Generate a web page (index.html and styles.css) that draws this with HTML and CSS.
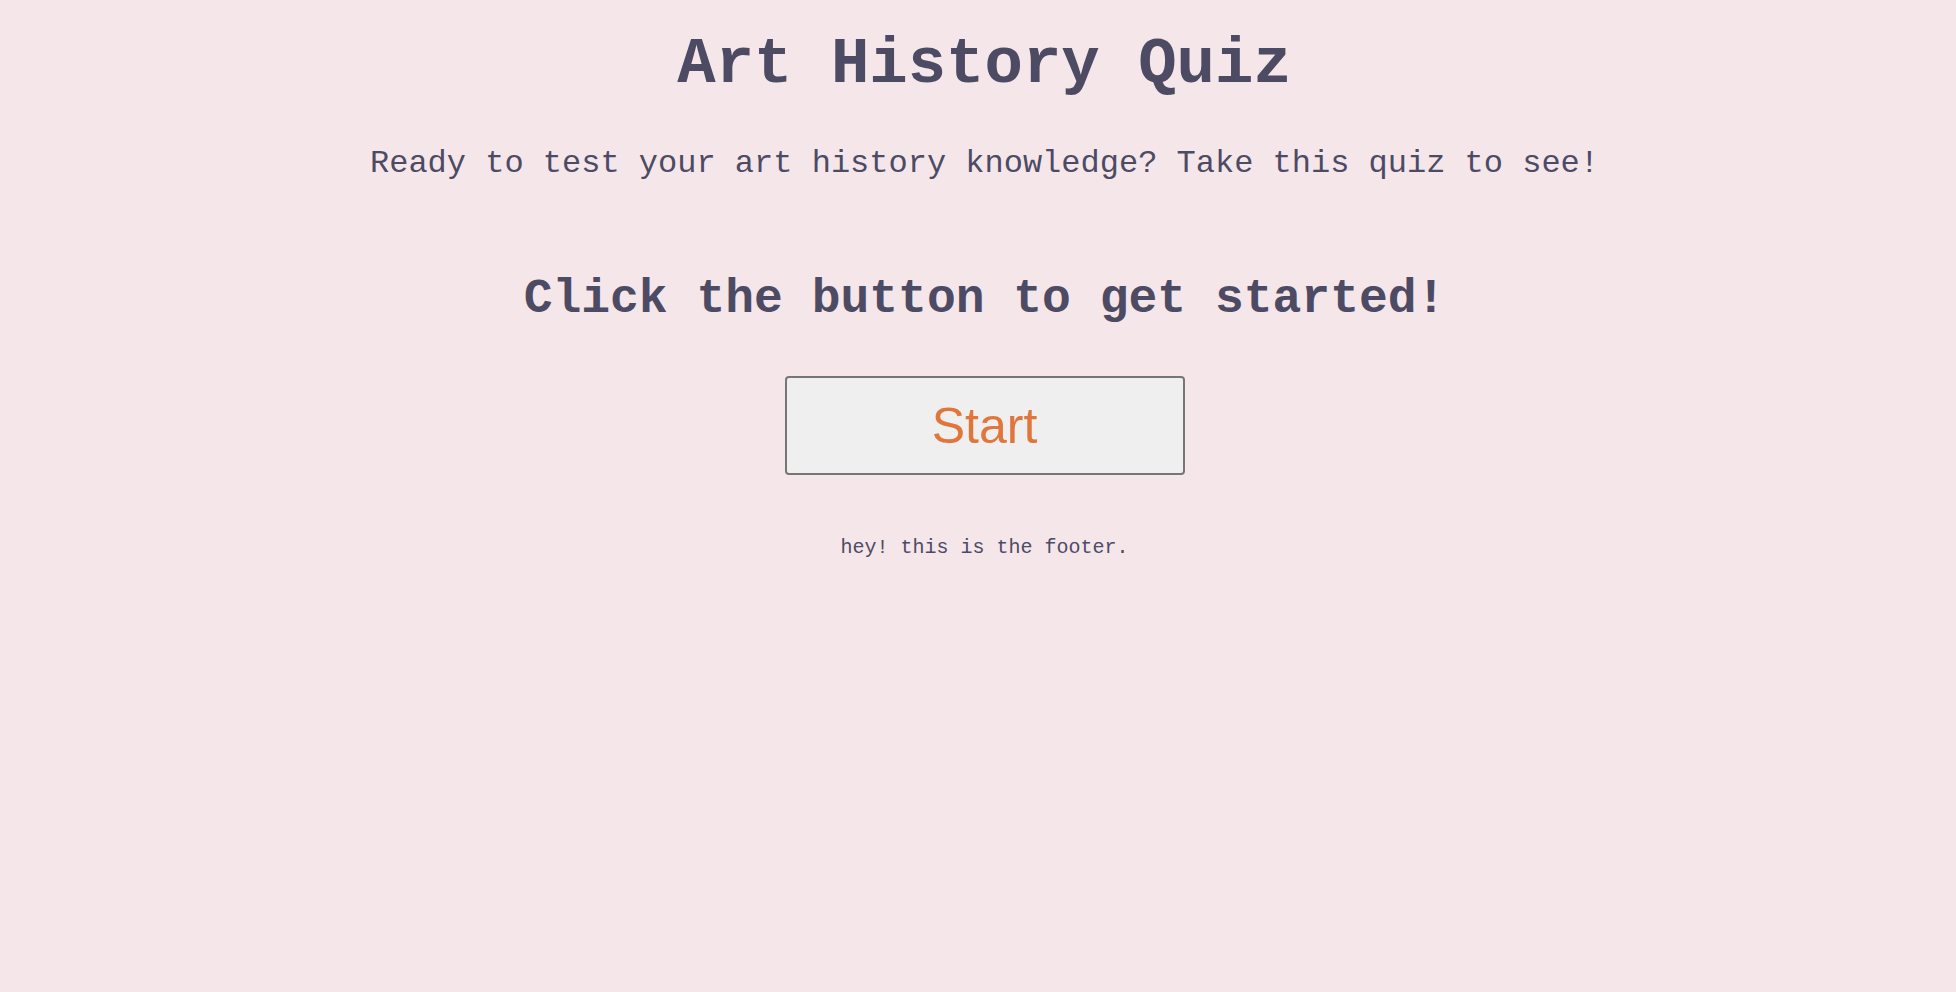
FILE: index.html
```html
<!DOCTYPE html>
<html lang="en">
<head>
<meta charset="utf-8">
<title>Art History Quiz</title>
<link rel="stylesheet" href="styles.css">
</head>
<body>
<main class="page">
  <h1 class="title">Art History Quiz</h1>
  <p class="intro">Ready to test your art history knowledge? Take this quiz to see!</p>
  <h2 class="prompt">Click the button to get started!</h2>
  <button class="start" type="button">Start</button>
  <footer class="footer">hey! this is the footer.</footer>
</main>
</body>
</html>
```
FILE: styles.css
```css
html, body {
  margin: 0;
  padding: 0;
  background: #f5e6ea;
}
body {
  min-height: 992px;
  font-family: "Liberation Mono", "Courier New", monospace;
  color: #4d4b64;
}
.page {
  display: flex;
  flex-direction: column;
  align-items: center;
  text-align: center;
  padding-left: 13px;
}
.title {
  margin: 33px 0 0;
  font-size: 64px;
  line-height: 1;
  font-weight: bold;
}
.intro {
  margin: 50.5px 0 0;
  font-size: 32px;
  line-height: 1;
}
.prompt {
  margin: 95.5px 0 0;
  font-size: 48px;
  line-height: 1;
  font-weight: bold;
}
.start {
  margin-top: 53px;
  width: 400px;
  height: 99px;
  box-sizing: border-box;
  border: 2px solid #767676;
  border-radius: 4px;
  background: #efefef;
  font-family: "Liberation Sans", Arial, sans-serif;
  font-size: 50px;
  line-height: 1;
  color: #e0763c;
  padding: 0;
}
.footer {
  margin-top: 62.7px;
  font-size: 20px;
  line-height: 1;
}
```
